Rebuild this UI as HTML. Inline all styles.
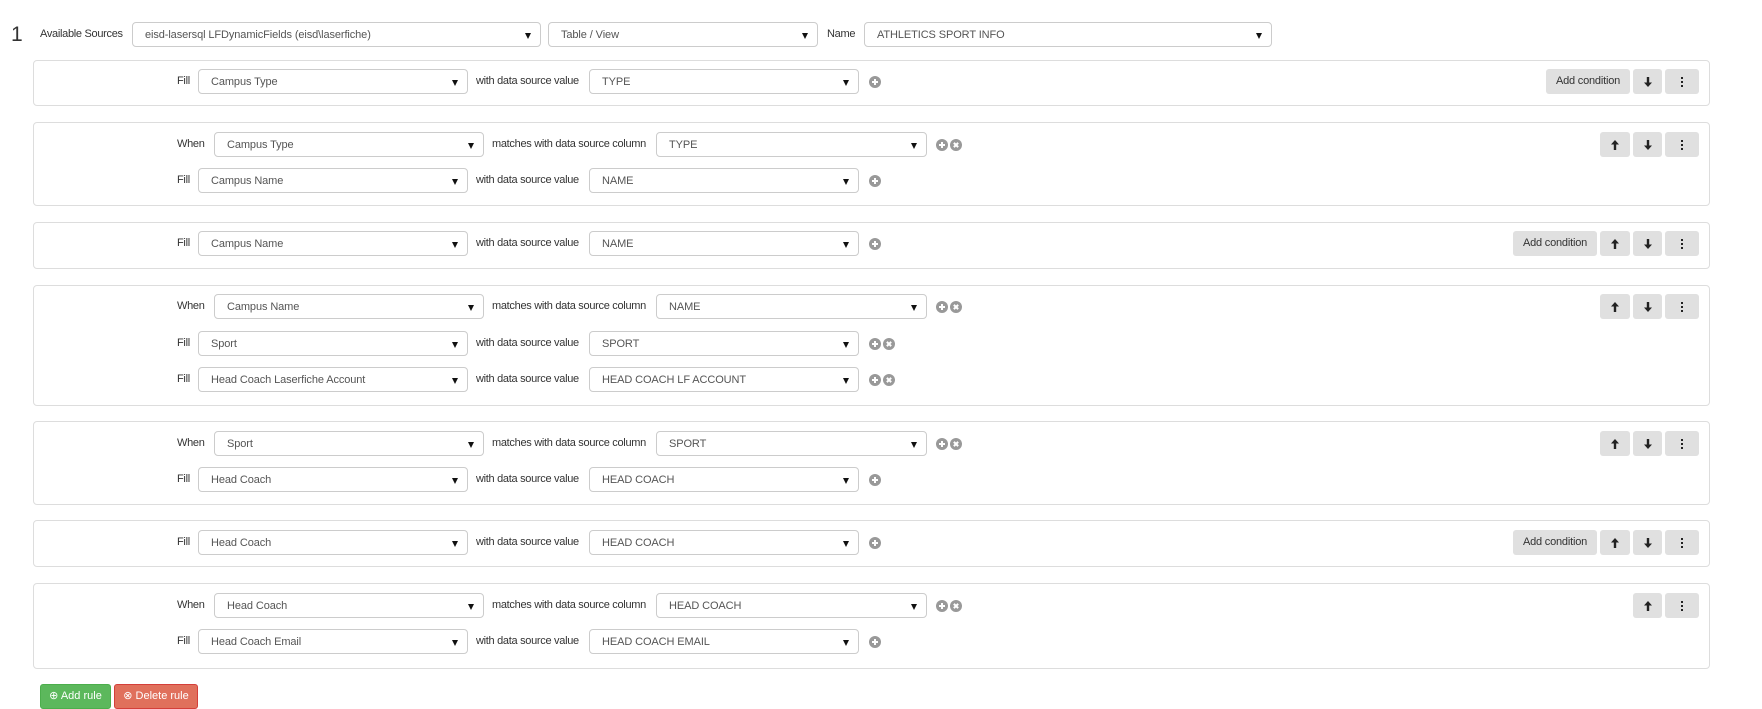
<!DOCTYPE html>
<html><head><meta charset="utf-8"><style>
*{box-sizing:border-box}
body{margin:0;width:1762px;height:694px;overflow:hidden;background:#fff;font-family:"Liberation Sans",Arial,sans-serif;font-size:11px;color:#333;position:relative}
.a{position:absolute}
.p{position:absolute;left:33px;width:1677px;border:1px solid #ddd;border-radius:4px}
.s{position:absolute;height:25px;border:1px solid #ccc;border-radius:4px;line-height:24px;padding-left:12px;color:#555;font-size:11px;background:#fff;white-space:nowrap;letter-spacing:-0.1px}
.s::after{content:"";position:absolute;right:9px;top:10px;border-left:3px solid transparent;border-right:3px solid transparent;border-top:6px solid #111}
.l{position:absolute;line-height:25px;height:25px;font-size:11px;color:#333;white-space:nowrap;letter-spacing:-0.3px}
.i{position:absolute;width:12px;height:12px;border-radius:50%;background:#999}
.i::before{content:"";position:absolute;left:3px;top:5px;width:6px;height:2px;background:#fff}
.i.p1::after{content:"";position:absolute;left:5px;top:3px;width:2px;height:6px;background:#fff}
.i.x::before{transform:rotate(45deg)}
.i.x::after{content:"";position:absolute;left:3px;top:5px;width:6px;height:2px;background:#fff;transform:rotate(-45deg)}
.b{position:absolute;height:25px;background:#e0e0e0;border-radius:3px;text-align:center;line-height:25px;font-size:11px;color:#333;letter-spacing:-0.2px}
.b svg{position:absolute;left:50%;top:50%;transform:translate(-50%,-50%)}
</style></head><body>
<svg width="0" height="0" style="position:absolute"><defs>
<symbol id="dn" viewBox="0 0 10 12"><path d="M5 11 L1 6.5 H3.8 V1 H6.2 V6.5 H9 Z" fill="#222"/></symbol>
<symbol id="up" viewBox="0 0 10 12"><path d="M5 1 L1 5.5 H3.8 V11 H6.2 V5.5 H9 Z" fill="#222"/></symbol>
<symbol id="mn" viewBox="0 0 4 12"><rect x="1" y="1" width="2" height="2" fill="#222"/><rect x="1" y="5" width="2" height="2" fill="#222"/><rect x="1" y="9" width="2" height="2" fill="#222"/></symbol>
</defs></svg>
<div class="a" style="left:11px;top:22px;font-size:21px;line-height:25px;color:#333">1</div>
<div class="l" style="left:40px;top:22px">Available Sources</div>
<div class="s" style="left:132px;top:22px;width:409px">eisd-lasersql LFDynamicFields (eisd\laserfiche)</div>
<div class="s" style="left:548px;top:22px;width:270px">Table / View</div>
<div class="l" style="left:827px;top:22px">Name</div>
<div class="s" style="left:864px;top:22px;width:408px">ATHLETICS SPORT INFO</div>

<!-- P1 -->
<div class="p" style="top:60px;height:46px"></div>
<div class="l" style="left:177px;top:69px">Fill</div><div class="s" style="left:198px;top:69px;width:270px">Campus Type</div>
<div class="l" style="left:476px;top:69px">with data source value</div><div class="s" style="left:589px;top:69px;width:270px">TYPE</div>
<div class="i p1" style="left:869px;top:76px"></div>
<div class="b" style="left:1546px;top:69px;width:84px">Add condition</div>
<div class="b" style="left:1633px;top:69px;width:29px"><svg width="10" height="12"><use href="#dn"/></svg></div>
<div class="b" style="left:1665px;top:69px;width:34px"><svg width="4" height="12"><use href="#mn"/></svg></div>

<!-- P2 -->
<div class="p" style="top:122px;height:84px"></div>
<div class="l" style="left:177px;top:132px">When</div><div class="s" style="left:214px;top:132px;width:270px">Campus Type</div>
<div class="l" style="left:492px;top:132px">matches with data source column</div><div class="s" style="left:656px;top:132px;width:271px">TYPE</div>
<div class="i p1" style="left:936px;top:139px"></div><div class="i x" style="left:950px;top:139px"></div>
<div class="l" style="left:177px;top:168px">Fill</div><div class="s" style="left:198px;top:168px;width:270px">Campus Name</div>
<div class="l" style="left:476px;top:168px">with data source value</div><div class="s" style="left:589px;top:168px;width:270px">NAME</div>
<div class="i p1" style="left:869px;top:175px"></div>
<div class="b" style="left:1600px;top:132px;width:30px"><svg width="10" height="12"><use href="#up"/></svg></div>
<div class="b" style="left:1633px;top:132px;width:29px"><svg width="10" height="12"><use href="#dn"/></svg></div>
<div class="b" style="left:1665px;top:132px;width:34px"><svg width="4" height="12"><use href="#mn"/></svg></div>

<!-- P3 -->
<div class="p" style="top:222px;height:47px"></div>
<div class="l" style="left:177px;top:231px">Fill</div><div class="s" style="left:198px;top:231px;width:270px">Campus Name</div>
<div class="l" style="left:476px;top:231px">with data source value</div><div class="s" style="left:589px;top:231px;width:270px">NAME</div>
<div class="i p1" style="left:869px;top:238px"></div>
<div class="b" style="left:1513px;top:231px;width:84px">Add condition</div>
<div class="b" style="left:1600px;top:231px;width:30px"><svg width="10" height="12"><use href="#up"/></svg></div>
<div class="b" style="left:1633px;top:231px;width:29px"><svg width="10" height="12"><use href="#dn"/></svg></div>
<div class="b" style="left:1665px;top:231px;width:34px"><svg width="4" height="12"><use href="#mn"/></svg></div>

<!-- P4 -->
<div class="p" style="top:285px;height:121px"></div>
<div class="l" style="left:177px;top:294px">When</div><div class="s" style="left:214px;top:294px;width:270px">Campus Name</div>
<div class="l" style="left:492px;top:294px">matches with data source column</div><div class="s" style="left:656px;top:294px;width:271px">NAME</div>
<div class="i p1" style="left:936px;top:301px"></div><div class="i x" style="left:950px;top:301px"></div>
<div class="l" style="left:177px;top:331px">Fill</div><div class="s" style="left:198px;top:331px;width:270px">Sport</div>
<div class="l" style="left:476px;top:331px">with data source value</div><div class="s" style="left:589px;top:331px;width:270px">SPORT</div>
<div class="i p1" style="left:869px;top:338px"></div><div class="i x" style="left:883px;top:338px"></div>
<div class="l" style="left:177px;top:367px">Fill</div><div class="s" style="left:198px;top:367px;width:270px">Head Coach Laserfiche Account</div>
<div class="l" style="left:476px;top:367px">with data source value</div><div class="s" style="left:589px;top:367px;width:270px">HEAD COACH LF ACCOUNT</div>
<div class="i p1" style="left:869px;top:374px"></div><div class="i x" style="left:883px;top:374px"></div>
<div class="b" style="left:1600px;top:294px;width:30px"><svg width="10" height="12"><use href="#up"/></svg></div>
<div class="b" style="left:1633px;top:294px;width:29px"><svg width="10" height="12"><use href="#dn"/></svg></div>
<div class="b" style="left:1665px;top:294px;width:34px"><svg width="4" height="12"><use href="#mn"/></svg></div>

<!-- P5 -->
<div class="p" style="top:421px;height:84px"></div>
<div class="l" style="left:177px;top:431px">When</div><div class="s" style="left:214px;top:431px;width:270px">Sport</div>
<div class="l" style="left:492px;top:431px">matches with data source column</div><div class="s" style="left:656px;top:431px;width:271px">SPORT</div>
<div class="i p1" style="left:936px;top:438px"></div><div class="i x" style="left:950px;top:438px"></div>
<div class="l" style="left:177px;top:467px">Fill</div><div class="s" style="left:198px;top:467px;width:270px">Head Coach</div>
<div class="l" style="left:476px;top:467px">with data source value</div><div class="s" style="left:589px;top:467px;width:270px">HEAD COACH</div>
<div class="i p1" style="left:869px;top:474px"></div>
<div class="b" style="left:1600px;top:431px;width:30px"><svg width="10" height="12"><use href="#up"/></svg></div>
<div class="b" style="left:1633px;top:431px;width:29px"><svg width="10" height="12"><use href="#dn"/></svg></div>
<div class="b" style="left:1665px;top:431px;width:34px"><svg width="4" height="12"><use href="#mn"/></svg></div>

<!-- P6 -->
<div class="p" style="top:520px;height:47px"></div>
<div class="l" style="left:177px;top:530px">Fill</div><div class="s" style="left:198px;top:530px;width:270px">Head Coach</div>
<div class="l" style="left:476px;top:530px">with data source value</div><div class="s" style="left:589px;top:530px;width:270px">HEAD COACH</div>
<div class="i p1" style="left:869px;top:537px"></div>
<div class="b" style="left:1513px;top:530px;width:84px">Add condition</div>
<div class="b" style="left:1600px;top:530px;width:30px"><svg width="10" height="12"><use href="#up"/></svg></div>
<div class="b" style="left:1633px;top:530px;width:29px"><svg width="10" height="12"><use href="#dn"/></svg></div>
<div class="b" style="left:1665px;top:530px;width:34px"><svg width="4" height="12"><use href="#mn"/></svg></div>

<!-- P7 -->
<div class="p" style="top:583px;height:86px"></div>
<div class="l" style="left:177px;top:593px">When</div><div class="s" style="left:214px;top:593px;width:270px">Head Coach</div>
<div class="l" style="left:492px;top:593px">matches with data source column</div><div class="s" style="left:656px;top:593px;width:271px">HEAD COACH</div>
<div class="i p1" style="left:936px;top:600px"></div><div class="i x" style="left:950px;top:600px"></div>
<div class="l" style="left:177px;top:629px">Fill</div><div class="s" style="left:198px;top:629px;width:270px">Head Coach Email</div>
<div class="l" style="left:476px;top:629px">with data source value</div><div class="s" style="left:589px;top:629px;width:270px">HEAD COACH EMAIL</div>
<div class="i p1" style="left:869px;top:636px"></div>
<div class="b" style="left:1633px;top:593px;width:29px"><svg width="10" height="12"><use href="#up"/></svg></div>
<div class="b" style="left:1665px;top:593px;width:34px"><svg width="4" height="12"><use href="#mn"/></svg></div>

<div class="a" style="left:40px;top:684px;width:71px;height:25px;background:#5cb85c;border:1px solid #4cae4c;border-radius:3px;color:#fff;font-size:11px;line-height:22px;text-align:center">⊕ Add rule</div>
<div class="a" style="left:114px;top:684px;width:84px;height:25px;background:#e0705c;border:1px solid #d43f3a;border-radius:3px;color:#fff;font-size:11px;line-height:22px;text-align:center">⊗ Delete rule</div>
</body></html>
